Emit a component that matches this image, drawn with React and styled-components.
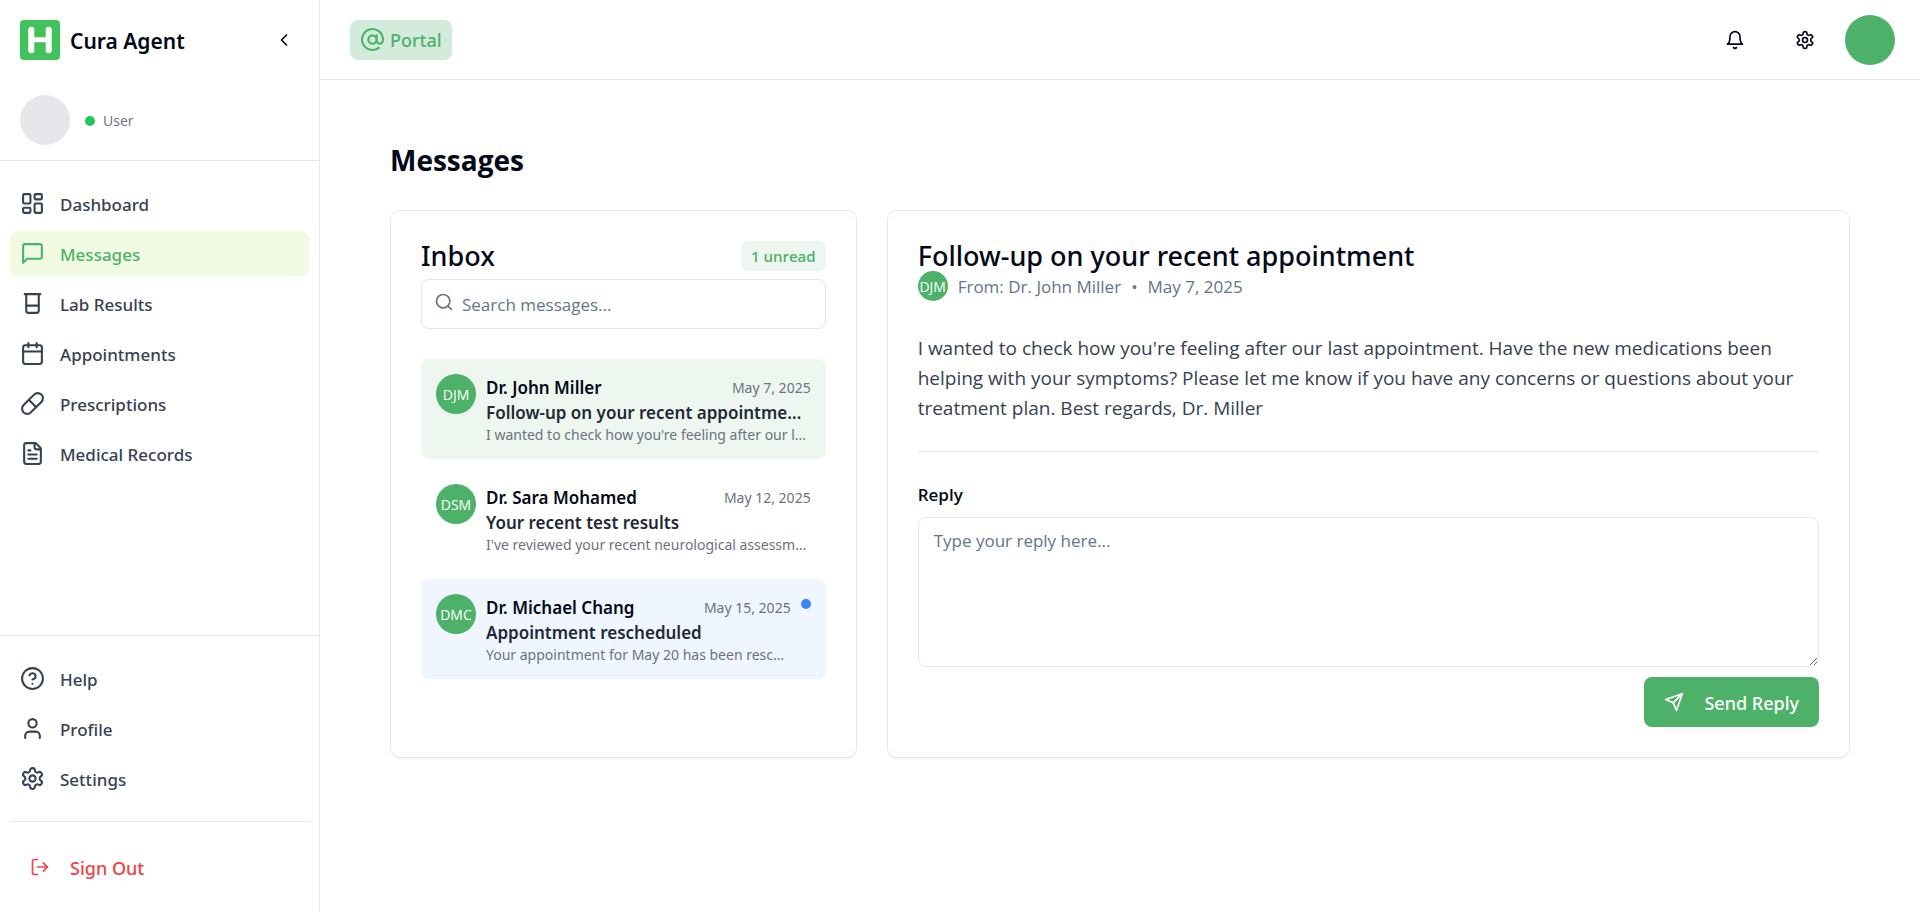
import React, { useState } from "react";
import styled, { createGlobalStyle, css } from "styled-components";
import {
  AtSign,
  Beaker,
  Calendar,
  ChevronLeft,
  CircleQuestionMark,
  LayoutDashboard,
  LogOut,
  Pill,
  Search,
  User,
} from "lucide-react";

const green = "#4db16a";
const line = "#e5e7eb";
const cardLine = "#e2e8f0";
const ink = "#020817";
const labelFont = `"Noto Sans", sans-serif`;

const GlobalStyle = createGlobalStyle`
  *, *::before, *::after { box-sizing: border-box; }
  body {
    margin: 0;
    background: #fff;
    color: ${ink};
    font-family: "Open Sans", "Noto Sans", sans-serif;
    font-size: 17px;
    line-height: 25px;
  }
  button, input, textarea { font: inherit; color: inherit; }
  button { background: none; border: 0; padding: 0; cursor: pointer; }
  a { color: inherit; text-decoration: none; }
  h1, h2, p, ul { margin: 0; padding: 0; }
  ul { list-style: none; }
`;

/* ---------- icons ---------- */

const Icon = ({ size = 25, children }) => (
  <svg
    width={size}
    height={size}
    viewBox="0 0 24 24"
    fill="none"
    stroke="currentColor"
    strokeWidth="2"
    strokeLinecap="round"
    strokeLinejoin="round"
    aria-hidden="true"
  >
    {children}
  </svg>
);

const MessageIcon = (props) => (
  <Icon {...props}>
    <path d="M21 15a2 2 0 0 1-2 2H7l-4 4V5a2 2 0 0 1 2-2h14a2 2 0 0 1 2 2z" />
  </Icon>
);

const FileIcon = (props) => (
  <Icon {...props}>
    <path d="M15 2H6a2 2 0 0 0-2 2v16a2 2 0 0 0 2 2h12a2 2 0 0 0 2-2V7Z" />
    <path d="M14 2v4a2 2 0 0 0 2 2h4" />
    <path d="M10 9H8" />
    <path d="M16 13H8" />
    <path d="M16 17H8" />
  </Icon>
);

const GearIcon = (props) => (
  <Icon {...props}>
    <path d="M12.22 2h-.44a2 2 0 0 0-2 2v.18a2 2 0 0 1-1 1.73l-.43.25a2 2 0 0 1-2 0l-.15-.08a2 2 0 0 0-2.73.73l-.22.38a2 2 0 0 0 .73 2.73l.15.1a2 2 0 0 1 1 1.72v.51a2 2 0 0 1-1 1.74l-.15.09a2 2 0 0 0-.73 2.73l.22.38a2 2 0 0 0 2.73.73l.15-.08a2 2 0 0 1 2 0l.43.25a2 2 0 0 1 1 1.73V20a2 2 0 0 0 2 2h.44a2 2 0 0 0 2-2v-.18a2 2 0 0 1 1-1.73l.43-.25a2 2 0 0 1 2 0l.15.08a2 2 0 0 0 2.73-.73l.22-.39a2 2 0 0 0-.73-2.73l-.15-.08a2 2 0 0 1-1-1.74v-.5a2 2 0 0 1 1-1.74l.15-.09a2 2 0 0 0 .73-2.73l-.22-.38a2 2 0 0 0-2.73-.73l-.15.08a2 2 0 0 1-2 0l-.43-.25a2 2 0 0 1-1-1.73V4a2 2 0 0 0-2-2z" />
    <circle cx="12" cy="12" r="3" />
  </Icon>
);

const BellIcon = (props) => (
  <Icon {...props}>
    <path d="M6 8a6 6 0 0 1 12 0c0 7 3 9 3 9H3s3-2 3-9" />
    <path d="M10.3 21a1.94 1.94 0 0 0 3.4 0" />
  </Icon>
);

const SendIcon = (props) => (
  <Icon {...props}>
    <path d="m22 2-7 20-4-9-9-4Z" />
    <path d="M22 2 11 13" />
  </Icon>
);

const Logo = () => (
  <svg width="40" height="40" viewBox="0 0 40 40" role="img" aria-label="Cura Agent logo">
    <rect width="40" height="40" rx="4" fill="#42c25b" />
    <g stroke="#fff" strokeWidth="6" strokeLinecap="round">
      <path d="M11.3 9.8V30.2M28.7 9.8V30.2" />
      <path d="M11.3 19.8H28.7" strokeWidth="5" />
    </g>
  </svg>
);

/* ---------- page frame ---------- */

const Page = styled.div`
  display: flex;
  min-height: 100vh;
`;

const Sidebar = styled.aside`
  flex: 0 0 320px;
  display: flex;
  flex-direction: column;
  border-right: 1px solid ${line};
`;

const Brand = styled.div`
  display: flex;
  align-items: center;
  gap: 10px;
  height: 80px;
  padding: 0 20px;
`;

const BrandName = styled.span`
  flex: 1;
  padding-top: 2px;
  font-family: ${labelFont};
  font-size: 21px;
  font-weight: 600;
  line-height: 30px;
`;

const CollapseButton = styled.button`
  display: grid;
  place-items: center;
  width: 30px;
  height: 30px;
`;

const UserPanel = styled.div`
  display: flex;
  align-items: center;
  gap: 15px;
  padding: 15px 20px;
  border-bottom: 1px solid ${line};
`;

const UserPhoto = styled.div`
  width: 50px;
  height: 50px;
  border-radius: 50%;
  background: ${line};
`;

const UserStatus = styled.div`
  display: flex;
  align-items: center;
  gap: 8px;
  padding-top: 2px;
  color: #6b7280;
  font-size: 14px;
  line-height: 20px;
`;

const Dot = styled.span`
  flex: none;
  width: 10px;
  height: 10px;
  border-radius: 50%;
  background: ${(p) => p.$color};
`;

const Nav = styled.nav`
  padding: 20px 10px;
  ${(p) =>
    p.$main
      ? css`flex: 1;`
      : css`border-top: 1px solid ${line};`}
`;

const NavList = styled.ul`
  display: flex;
  flex-direction: column;
  gap: 5px;
`;

const NavLink = styled.a`
  display: flex;
  align-items: center;
  gap: 15px;
  height: 45px;
  padding: 0 10px;
  border-radius: 8px;
  font-family: ${labelFont};
  font-weight: 500;
  color: ${(p) => (p.$active ? green : "#374151")};
  background: ${(p) => (p.$active ? "#f1fbe1" : "transparent")};

  span { padding-top: 2px; }
`;

const SignOutArea = styled.div`
  margin-top: 20px;
  padding-top: 20px;
  border-top: 1px solid ${line};
`;

const SignOutButton = styled.button`
  display: flex;
  align-items: center;
  gap: 20px;
  width: 100%;
  height: 50px;
  padding: 0 20px;
  color: #ef4444;
  font-family: ${labelFont};
  font-size: 18px;
  font-weight: 500;

  span { padding-top: 2px; }
`;

const Content = styled.div`
  flex: 1;
  min-width: 0;
`;

const TopBar = styled.header`
  display: flex;
  align-items: center;
  justify-content: space-between;
  height: 80px;
  padding: 0 25px 0 30px;
  border-bottom: 1px solid ${line};
`;

const PortalBadge = styled.a`
  display: flex;
  align-items: center;
  gap: 5px;
  height: 40px;
  padding: 0 10px;
  border-radius: 8px;
  background: #d2ebda;
  color: ${green};
  font-family: ${labelFont};
  font-size: 18px;
  font-weight: 500;

  span { padding-top: 2px; }
`;

const TopActions = styled.div`
  display: flex;
  align-items: center;
  gap: 15px;
`;

const IconButtons = styled.div`
  display: flex;
  gap: 20px;
`;

const IconButton = styled.button`
  display: grid;
  place-items: center;
  width: 50px;
  height: 50px;
`;

const ProfileButton = styled.button`
  width: 50px;
  height: 50px;
  border-radius: 50%;
  background: ${green};
`;

/* ---------- messages ---------- */

const Main = styled.main`
  padding: 60px 70px;
`;

const PageTitle = styled.h1`
  margin-bottom: 30px;
  font-size: 28px;
  font-weight: 700;
  line-height: 40px;
`;

const Columns = styled.div`
  display: grid;
  grid-template-columns: repeat(3, minmax(0, 1fr));
  gap: 30px;
`;

const Card = styled.section`
  grid-column: span ${(p) => p.$span};
  padding: 30px;
  border: 1px solid ${cardLine};
  border-radius: 10px;
  box-shadow: 0 1px 2px rgba(0, 0, 0, 0.05);
`;

const CardTitle = styled.h2`
  font-family: ${labelFont};
  font-size: 27px;
  font-weight: 500;
  line-height: 30px;
`;

const InboxHead = styled.div`
  display: flex;
  align-items: center;
  justify-content: space-between;
  margin-bottom: 8px;
`;

const UnreadBadge = styled.span`
  padding: 3px 10px 2px;
  border-radius: 8px;
  background: #edf7f0;
  color: ${green};
  font-size: 15px;
  font-weight: 600;
`;

const SearchBox = styled.label`
  display: flex;
  align-items: center;
  gap: 8px;
  height: 50px;
  padding: 0 12px;
  border: 1px solid ${cardLine};
  border-radius: 8px;
  color: #6b7280;

  svg { flex: none; margin-bottom: 5px; }
`;

const SearchInput = styled.input`
  flex: 1;
  min-width: 0;
  padding: 0;
  border: 0;
  outline: 0;
  background: none;
  color: ${ink};
  &::placeholder { color: #64748b; opacity: 1; }
`;

const MessageList = styled.ul`
  display: flex;
  flex-direction: column;
  gap: 10px;
  margin-top: 30px;
`;

const MessageRow = styled.button`
  display: flex;
  align-items: flex-start;
  gap: 10px;
  width: 100%;
  height: 100px;
  padding: 15px;
  border-radius: 8px;
  text-align: left;
  font-family: ${labelFont};
  background: ${(p) =>
    p.$selected ? "#edf7f0" : p.$unread ? "#eff6ff" : "transparent"};

  > ${Dot} { margin-top: 5px; }
`;

const Avatar = styled.span`
  flex: none;
  display: flex;
  align-items: center;
  justify-content: center;
  width: ${(p) => p.$size}px;
  height: ${(p) => p.$size}px;
  border-radius: 50%;
  overflow: hidden;
  background: ${green};
  color: #fff;
  font-family: "Open Sans", sans-serif;
  font-size: 14px;
`;

const MessageText = styled.span`
  flex: 1;
  min-width: 0;
  padding-top: 1px;
`;

const MessageHead = styled.span`
  display: flex;
  align-items: center;
  justify-content: space-between;
`;

const Sender = styled.span`
  font-weight: 600;
`;

const Stamp = styled.span`
  color: #6b7280;
  font-size: 14px;
`;

const clipped = css`
  display: block;
  overflow: hidden;
  white-space: nowrap;
  text-overflow: ellipsis;
`;

const Subject = styled.span`
  ${clipped}
  margin-right: 8px;
  color: #1f2937;
  font-weight: 600;
`;

const Preview = styled.span`
  ${clipped}
  color: #6b7280;
  font-size: 14px;
  line-height: 20px;
`;

const FromLine = styled.div`
  display: flex;
  align-items: center;
  gap: 10px;
  color: #64748b;
`;

const Body = styled.p`
  margin: 32px 0 28px;
  color: #374151;
  font-size: 19px;
  line-height: 30px;
`;

const ReplyForm = styled.form`
  display: flex;
  flex-direction: column;
  gap: 10px;
  padding-top: 30px;
  border-top: 1px solid ${cardLine};
`;

const ReplyLabel = styled.label`
  font-weight: 600;
`;

const ReplyBox = styled.textarea`
  display: block;
  width: 100%;
  height: 150px;
  padding: 10px 15px;
  border: 1px solid ${cardLine};
  border-radius: 8px;
  outline: 0;
  resize: vertical;
  &::placeholder { color: #64748b; opacity: 1; }
`;

const SendButton = styled.button`
  align-self: flex-end;
  display: flex;
  align-items: center;
  gap: 20px;
  height: 50px;
  padding: 0 20px;
  border-radius: 8px;
  background: ${green};
  color: #fff;
  font-family: ${labelFont};
  font-size: 18px;
  font-weight: 500;

  span { padding-top: 2px; }
`;

const mainLinks = [
  ["Dashboard", LayoutDashboard],
  ["Messages", MessageIcon],
  ["Lab Results", Beaker],
  ["Appointments", Calendar],
  ["Prescriptions", Pill],
  ["Medical Records", FileIcon],
];

const extraLinks = [
  ["Help", CircleQuestionMark],
  ["Profile", User],
  ["Settings", GearIcon],
];

const messages = [
  {
    initials: "DJM",
    sender: "Dr. John Miller",
    date: "May 7, 2025",
    subject: "Follow-up on your recent appointment",
    body:
      "I wanted to check how you're feeling after our last appointment. Have the new medications been helping with your symptoms? Please let me know if you have any concerns or questions about your treatment plan. Best regards, Dr. Miller",
  },
  {
    initials: "DSM",
    sender: "Dr. Sara Mohamed",
    date: "May 12, 2025",
    subject: "Your recent test results",
    body: "I've reviewed your recent neurological assessment results.",
  },
  {
    initials: "DMC",
    sender: "Dr. Michael Chang",
    date: "May 15, 2025",
    subject: "Appointment rescheduled",
    body: "Your appointment for May 20 has been rescheduled to May 22.",
    unread: true,
  },
];

const Links = ({ items }) => (
  <NavList>
    {items.map(([label, LinkIcon]) => (
      <li key={label}>
        <NavLink href="#" $active={label === "Messages"}>
          <LinkIcon size={25} />
          <span>{label}</span>
        </NavLink>
      </li>
    ))}
  </NavList>
);

export default function App() {
  const [selected, setSelected] = useState(0);
  const open = messages[selected];

  return (
    <>
      <GlobalStyle />
      <Page>
        <Sidebar>
          <Brand>
            <Logo />
            <BrandName>Cura Agent</BrandName>
            <CollapseButton type="button" aria-label="Collapse sidebar">
              <ChevronLeft size={20} />
            </CollapseButton>
          </Brand>
          <UserPanel>
            <UserPhoto />
            <UserStatus>
              <Dot $color="#22c55e" />
              User
            </UserStatus>
          </UserPanel>
          <Nav $main aria-label="Main">
            <Links items={mainLinks} />
          </Nav>
          <Nav aria-label="Account">
            <Links items={extraLinks} />
            <SignOutArea>
              <SignOutButton type="button">
                <LogOut size={20} />
                <span>Sign Out</span>
              </SignOutButton>
            </SignOutArea>
          </Nav>
        </Sidebar>

        <Content>
          <TopBar>
            <PortalBadge href="#">
              <AtSign size={25} />
              <span>Portal</span>
            </PortalBadge>
            <TopActions>
              <IconButtons>
                <IconButton type="button" aria-label="Notifications">
                  <BellIcon size={20} />
                </IconButton>
                <IconButton type="button" aria-label="Settings">
                  <GearIcon size={20} />
                </IconButton>
              </IconButtons>
              <ProfileButton type="button" aria-label="Profile menu" />
            </TopActions>
          </TopBar>

          <Main>
            <PageTitle>Messages</PageTitle>
            <Columns>
              <Card $span={1}>
                <InboxHead>
                  <CardTitle>Inbox</CardTitle>
                  <UnreadBadge>1 unread</UnreadBadge>
                </InboxHead>
                <SearchBox>
                  <Search size={20} />
                  <SearchInput
                    type="text"
                    placeholder="Search messages..."
                    aria-label="Search messages"
                  />
                </SearchBox>
                <MessageList>
                  {messages.map((m, i) => (
                    <li key={m.sender}>
                      <MessageRow
                        type="button"
                        $selected={i === selected}
                        $unread={m.unread}
                        onClick={() => setSelected(i)}
                      >
                        <Avatar $size={40}>{m.initials}</Avatar>
                        <MessageText>
                          <MessageHead>
                            <Sender>{m.sender}</Sender>
                            <Stamp>{m.date}</Stamp>
                          </MessageHead>
                          <Subject>{m.subject}</Subject>
                          <Preview>{m.body}</Preview>
                        </MessageText>
                        {m.unread && <Dot $color="#3b82f6" />}
                      </MessageRow>
                    </li>
                  ))}
                </MessageList>
              </Card>

              <Card $span={2}>
                <CardTitle>{open.subject}</CardTitle>
                <FromLine>
                  <Avatar $size={30}>{open.initials}</Avatar>
                  <span>From: {open.sender}</span>
                  <span>•</span>
                  <span>{open.date}</span>
                </FromLine>
                <Body>{open.body}</Body>
                <ReplyForm onSubmit={(e) => e.preventDefault()}>
                  <ReplyLabel htmlFor="reply">Reply</ReplyLabel>
                  <ReplyBox id="reply" placeholder="Type your reply here..." />
                  <SendButton type="submit">
                    <SendIcon size={20} />
                    <span>Send Reply</span>
                  </SendButton>
                </ReplyForm>
              </Card>
            </Columns>
          </Main>
        </Content>
      </Page>
    </>
  );
}
